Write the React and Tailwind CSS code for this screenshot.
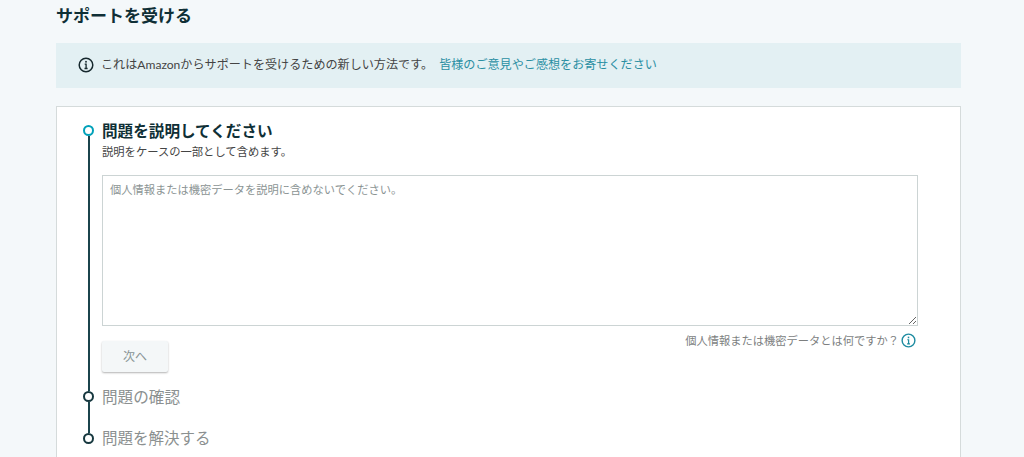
import React from "react";

function InfoIcon({ className }) {
  return (
    <svg viewBox="0 0 16 16" className={className} fill="none" stroke="currentColor">
      <circle cx="8" cy="8" r="6.8" strokeWidth="1.5" />
      <rect x="7.2" y="3.9" width="1.6" height="1.7" fill="currentColor" stroke="none" />
      <path d="M6.7 7.2H8.1V11.3M6.5 11.5H9.6" strokeWidth="1.3" />
    </svg>
  );
}

function Dot({ active }) {
  return (
    <div className={`w-[11px] h-[11px] rounded-full border-2 bg-white shrink-0 ${active ? "border-[#00a1b9]" : "border-[#16383f]"}`} />
  );
}

function Step({ active, last, height, children }) {
  return (
    <div className={`flex gap-2 ${height}`}>
      <div className="flex flex-col items-center w-[11px] shrink-0">
        <Dot active={active} />
        {!last && <div className="w-[2px] flex-1 bg-[#1b444c]" />}
      </div>
      <div className="flex-1 min-w-0 -mt-[4px]">{children}</div>
    </div>
  );
}

export default function App() {
  return (
    <div className="h-[457px] overflow-hidden bg-[#f4f8fa] px-[56px] text-[#16191f] font-['Lato','Noto_Sans_CJK_JP',sans-serif]">
      <div className="w-[905px]">
        <h1 className="text-[17px] leading-[20px] font-bold text-[#0f2f36] pt-[6px] pb-[17px]">サポートを受ける</h1>

        <div className="h-[45px] bg-[#e3f0f3] flex items-center pl-[22px] text-[12.1px] text-[#444]">
          <InfoIcon className="w-[16px] h-[16px] text-[#16282d] mr-[7px] -mt-[1px]" />
          <span>これはAmazonからサポートを受けるための新しい方法です。</span>
          <a className="ml-[6px] text-[#2b8fa3]">皆様のご意見やご感想をお寄せください</a>
        </div>

        <div className="mt-[18px] h-[400px] bg-white border border-[#d5dbdb] pl-[26px] pt-[18px]">
          <Step active height="h-[266px]">
            <div className="text-[15.6px] leading-[20px] font-bold text-[#0f2f36]">問題を説明してください</div>
            <div className="text-[11.3px] leading-[16px] text-[#444] mt-[3px]">説明をケースの一部として含めます。</div>
            <textarea
              readOnly
              placeholder="個人情報または機密データを説明に含めないでください。"
              className="block mt-[15px] w-[816px] h-[151px] border border-[#ccd4d4] bg-white px-[7px] py-[6px] text-[11.25px] leading-[16px] placeholder:text-[#8b9494] outline-none"
            />
            <div className="flex w-[816px] mt-[6px]">
              <button className="w-[66px] h-[31px] mt-[9px] bg-[#f4f7f8] rounded-[2px] shadow-[0_1px_2px_rgba(0,0,0,0.3)] text-[12px] text-[#8a9596]">次へ</button>
              <div className="flex-1 flex justify-end items-start text-[11.25px] leading-[18px] text-[#7d7f7f] pr-[2px]">
                <span>個人情報または機密データとは何ですか？</span>
                <InfoIcon className="w-[15px] h-[15px] text-[#1d8ba0] ml-[2px] mt-[1px]" />
              </div>
            </div>
          </Step>
          <Step height="h-[42px]">
            <div className="text-[15.6px] leading-[20px] text-[#8b9090]">問題の確認</div>
          </Step>
          <Step last height="h-[41px]">
            <div className="text-[15.5px] leading-[20px] text-[#8b9090] -mt-[1px]">問題を解決する</div>
          </Step>
        </div>
      </div>
    </div>
  );
}
